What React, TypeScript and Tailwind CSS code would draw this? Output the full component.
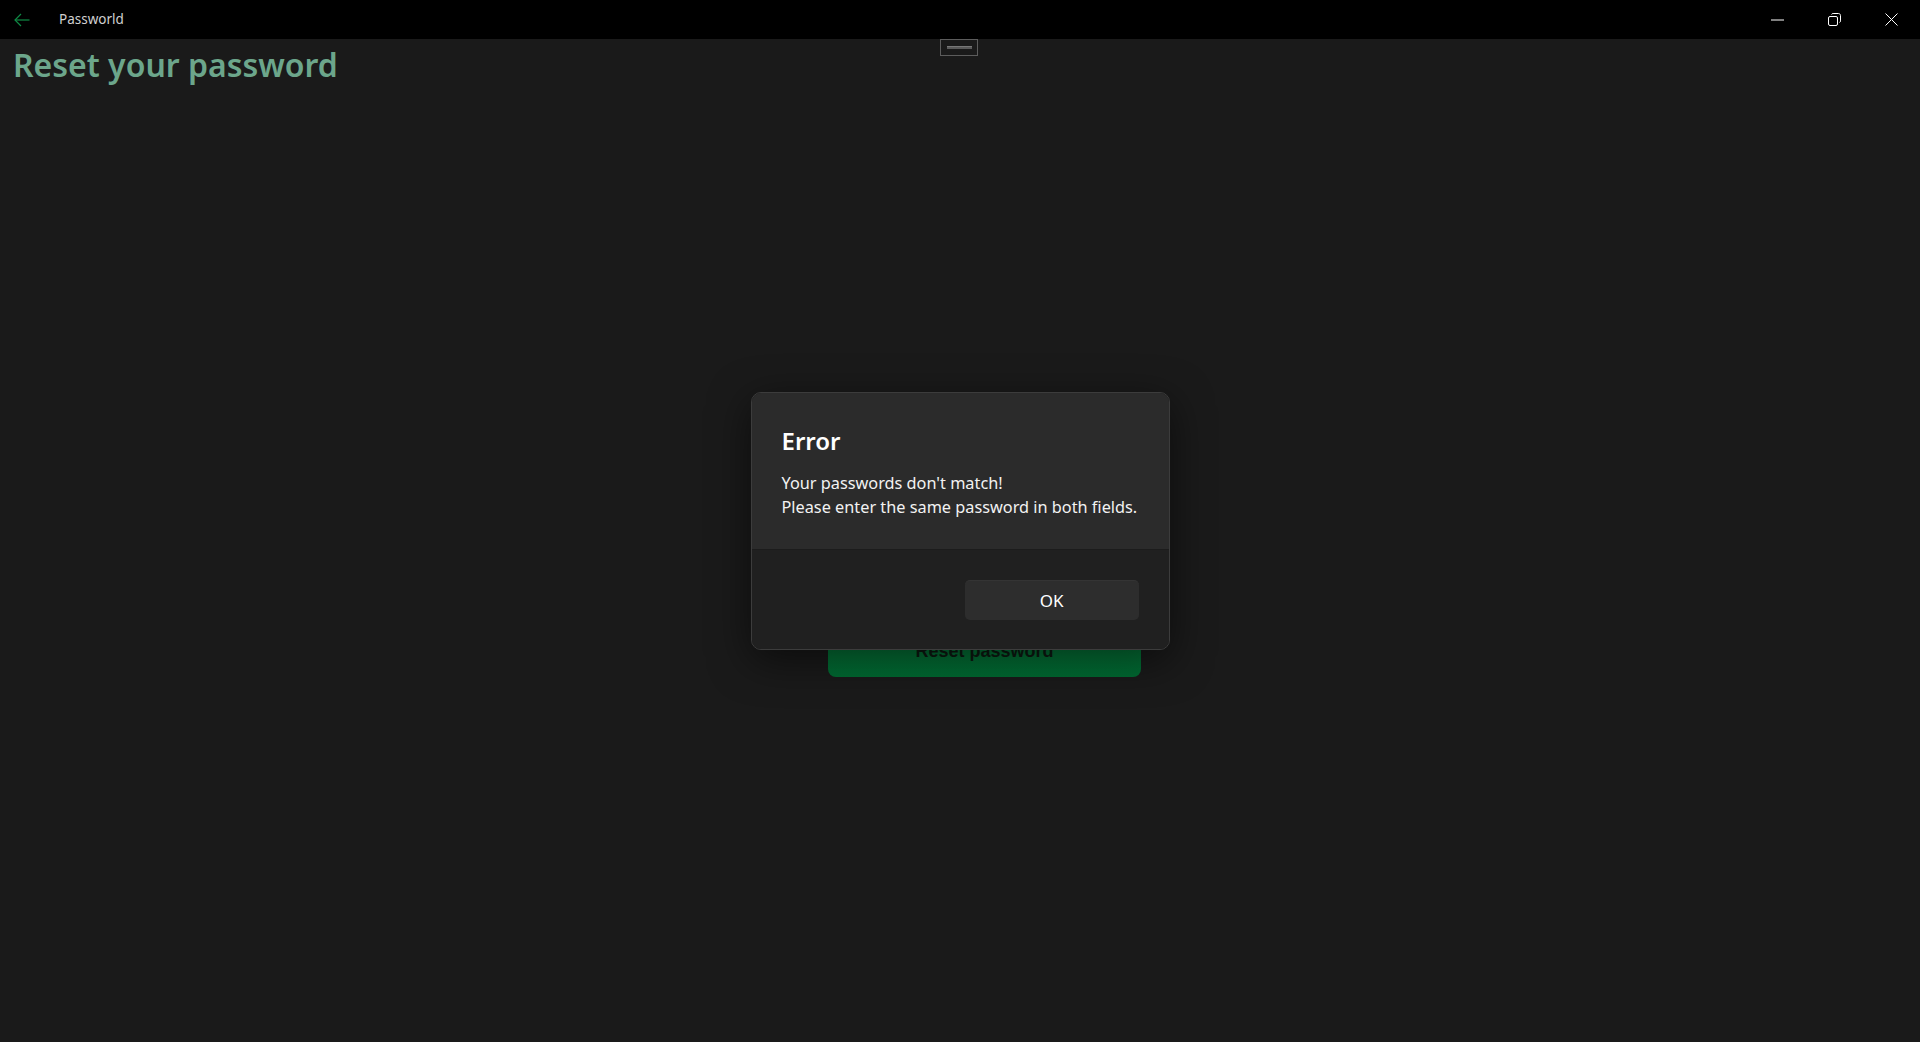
import React from 'react';

const uiFont = { fontFamily: '"Segoe UI", "Noto Sans", "Open Sans", sans-serif' };

function CaptionButton({ children }: { children: React.ReactNode }) {
  return (
    <div className="w-[57px] h-full flex items-center justify-center text-white">
      {children}
    </div>
  );
}

function TitleBar() {
  return (
    <div className="h-[39px] bg-black flex items-center shrink-0">
      <div className="w-[44px] h-full flex items-center pl-[14px]">
        <svg width="16" height="14" viewBox="0 0 16 14" fill="none" stroke="#0f8a45" strokeWidth="1.2">
          <path d="M15.5 7H1" />
          <path d="M7 1L1 7l6 6" />
        </svg>
      </div>
      <span className="ml-[15px] text-[13.5px] text-[#d0d0d0]" style={uiFont}>
        Passworld
      </span>
      <div className="ml-auto flex h-full">
        <CaptionButton>
          <svg width="13" height="2" viewBox="0 0 13 2">
            <path d="M0 1h13" stroke="white" strokeWidth="1" />
          </svg>
        </CaptionButton>
        <CaptionButton>
          <svg width="13" height="13" viewBox="0 0 13 13" fill="none" stroke="white" strokeWidth="1">
            <rect x="0.5" y="3.5" width="9" height="9" rx="1.5" />
            <path d="M3.5 1.5c0.3-0.7 0.9-1 1.6-1h5.4c1.1 0 2 0.9 2 2v5.4c0 0.7-0.3 1.3-1 1.6" />
          </svg>
        </CaptionButton>
        <CaptionButton>
          <svg width="13" height="13" viewBox="0 0 13 13" fill="none" stroke="white" strokeWidth="1">
            <path d="M0.5 0.5l12 12M12.5 0.5l-12 12" />
          </svg>
        </CaptionButton>
      </div>
    </div>
  );
}

function ErrorDialog() {
  return (
    <div className="absolute inset-0 flex items-center justify-center">
      <div
        className="w-[419px] h-[258px] rounded-[10px] border border-[#3c3c3c] overflow-hidden flex flex-col shadow-[0_10px_40px_rgba(0,0,0,0.55)]"
        style={uiFont}
      >
        <div className="bg-[#2b2b2b] px-[30px] pt-[30px] h-[157px] border-b border-[#1c1c1c]">
          <h2 className="text-[24px] leading-[35px] font-semibold text-white">Error</h2>
          <p className="mt-[13px] text-[16.3px] leading-[24px] text-[#f2f2f2] whitespace-nowrap">
            Your passwords don't match!
            <br />
            Please enter the same password in both fields.
          </p>
        </div>
        <div className="flex-1 bg-[#202020] px-[30px] pt-[30px]">
          <div className="grid grid-cols-2 gap-[10px]">
            <div />
            <button className="h-[40px] rounded-[5px] bg-[#2d2d2d] border-t border-[#343434] text-[17px] text-white">
              OK
            </button>
          </div>
        </div>
      </div>
    </div>
  );
}

export default function App() {
  return (
    <div className="relative w-full h-[1042px] bg-[#1a1a1a] flex flex-col overflow-hidden">
      <TitleBar />
      <main className="flex-1 flex flex-col">
        <h1
          className="ml-[13px] mt-[3px] text-[32px] leading-[45px] font-semibold text-[#6ca68b]"
          style={uiFont}
        >
          Reset your password
        </h1>
        <div className="mt-[538px] ml-[828px] w-[313px] h-[52px] rounded-[8px] bg-gradient-to-b from-[#0a7d3d] to-[#006a32] flex items-center justify-center">
          <span
            className="text-[18px] font-semibold text-[#0e1a12]"
            style={{ fontFamily: '"Liberation Sans", Arial, sans-serif' }}
          >
            Reset password
          </span>
        </div>
      </main>
      <div className="absolute top-[39px] left-[940px] w-[38px] h-[17px] border border-[#5c5c5c] flex items-center justify-center">
        <div className="w-[25px] h-[3px] bg-[#5a5a5a] border-t border-[#777]" />
      </div>
      <ErrorDialog />
    </div>
  );
}
